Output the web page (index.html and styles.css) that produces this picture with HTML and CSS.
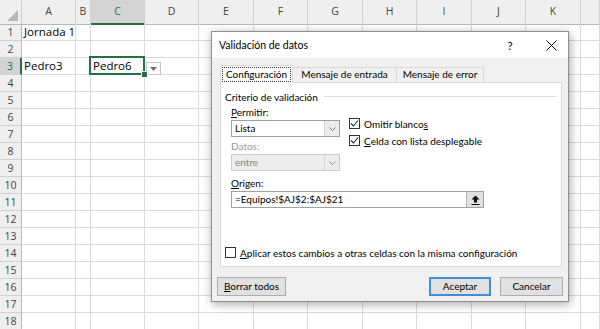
FILE: index.html
```html
<!DOCTYPE html>
<html>
<head>
<meta charset="UTF-8">
<title>Validación de datos</title>
<link rel="stylesheet" href="styles.css">
</head>
<body>
<div class="sheet">
  <div class="row head">
    <div class="corner"></div><div>A</div><div>B</div><div class="on">C</div><div>D</div><div>E</div><div>F</div><div>G</div><div>H</div><div>I</div><div>J</div><div>K</div><div></div>
  </div>
  <div class="row"><div class="num">1</div><div>Jornada 1</div><div></div><div></div><div></div><div></div><div></div><div></div><div></div><div></div><div></div><div></div><div></div></div>
  <div class="row"><div class="num">2</div><div></div><div></div><div></div><div></div><div></div><div></div><div></div><div></div><div></div><div></div><div></div><div></div></div>
  <div class="row"><div class="num on">3</div><div>Pedro3</div><div></div><div class="active">Pedro6<span class="handle"></span><span class="drop"><svg width="7" height="4" viewBox="0 0 7 4"><path d="M0 0h7L3.5 4z" fill="#6d6d6d"/></svg></span></div><div></div><div></div><div></div><div></div><div></div><div></div><div></div><div></div><div></div></div>
  <div class="row"><div class="num">4</div><div></div><div></div><div></div><div></div><div></div><div></div><div></div><div></div><div></div><div></div><div></div><div></div></div>
  <div class="row"><div class="num">5</div><div></div><div></div><div></div><div></div><div></div><div></div><div></div><div></div><div></div><div></div><div></div><div></div></div>
  <div class="row"><div class="num">6</div><div></div><div></div><div></div><div></div><div></div><div></div><div></div><div></div><div></div><div></div><div></div><div></div></div>
  <div class="row"><div class="num">7</div><div></div><div></div><div></div><div></div><div></div><div></div><div></div><div></div><div></div><div></div><div></div><div></div></div>
  <div class="row"><div class="num">8</div><div></div><div></div><div></div><div></div><div></div><div></div><div></div><div></div><div></div><div></div><div></div><div></div></div>
  <div class="row"><div class="num">9</div><div></div><div></div><div></div><div></div><div></div><div></div><div></div><div></div><div></div><div></div><div></div><div></div></div>
  <div class="row"><div class="num">10</div><div></div><div></div><div></div><div></div><div></div><div></div><div></div><div></div><div></div><div></div><div></div><div></div></div>
  <div class="row"><div class="num">11</div><div></div><div></div><div></div><div></div><div></div><div></div><div></div><div></div><div></div><div></div><div></div><div></div></div>
  <div class="row"><div class="num">12</div><div></div><div></div><div></div><div></div><div></div><div></div><div></div><div></div><div></div><div></div><div></div><div></div></div>
  <div class="row"><div class="num">13</div><div></div><div></div><div></div><div></div><div></div><div></div><div></div><div></div><div></div><div></div><div></div><div></div></div>
  <div class="row"><div class="num">14</div><div></div><div></div><div></div><div></div><div></div><div></div><div></div><div></div><div></div><div></div><div></div><div></div></div>
  <div class="row"><div class="num">15</div><div></div><div></div><div></div><div></div><div></div><div></div><div></div><div></div><div></div><div></div><div></div><div></div></div>
  <div class="row"><div class="num">16</div><div></div><div></div><div></div><div></div><div></div><div></div><div></div><div></div><div></div><div></div><div></div><div></div></div>
  <div class="row"><div class="num">17</div><div></div><div></div><div></div><div></div><div></div><div></div><div></div><div></div><div></div><div></div><div></div><div></div></div>
  <div class="row"><div class="num">18</div><div></div><div></div><div></div><div></div><div></div><div></div><div></div><div></div><div></div><div></div><div></div><div></div></div>
</div>

<div class="dialog">
  <div class="titlebar">
    <span class="title">Validación de datos</span>
    <span class="tbtn help">?</span>
    <span class="tbtn close"><svg width="11" height="11" viewBox="0 0 11 11"><path d="M0.5 0.5l10 10M10.5 0.5l-10 10" stroke="#000" stroke-width="1"/></svg></span>
  </div>
  <div class="dlg-body">
    <div class="tabs">
      <div class="tab on"><span class="focus">Configuración</span></div>
      <div class="tab t2">Mensaje de entrada</div>
      <div class="tab t3">Mensaje de error</div>
    </div>
    <div class="panel">
      <div class="legend">Criterio de validación</div>
      <div class="form">
        <div class="fields">
          <div class="col-left">
            <div class="label"><u>P</u>ermitir:</div>
            <div class="select"><span class="val">Lista</span><span class="arrow"><svg width="7" height="4" viewBox="0 0 7 4"><path d="M0.5 0.5l3 3 3-3" fill="none" stroke="#707070"/></svg></span></div>
            <div class="label dim">Datos:</div>
            <div class="select off"><span class="val">entre</span><span class="arrow"><svg width="7" height="4" viewBox="0 0 7 4"><path d="M0.5 0.5l3 3 3-3" fill="none" stroke="#8a8a8a"/></svg></span></div>
          </div>
          <div class="col-right">
            <div class="check"><span class="box"><svg width="9" height="9" viewBox="0 0 9 9"><path d="M1 4.5l2.5 2.5 4.5-5.5" fill="none" stroke="#222" stroke-width="1.1"/></svg></span>Omitir blanco<u>s</u></div>
            <div class="check"><span class="box"><svg width="9" height="9" viewBox="0 0 9 9"><path d="M1 4.5l2.5 2.5 4.5-5.5" fill="none" stroke="#222" stroke-width="1.1"/></svg></span><u>C</u>elda con lista desplegable</div>
          </div>
        </div>
        <div class="label origin"><u>O</u>rigen:</div>
        <div class="input"><span class="val">=Equipos!$AJ$2:$AJ$21</span><span class="pick"><svg width="9" height="10" viewBox="0 0 9 10"><path d="M4.5 0.5L8.5 4.5H6V7.5H3V4.5H0.5Z" fill="#111"/><path d="M0.5 9.5h8" stroke="#111"/></svg></span></div>
      </div>
      <div class="check apply"><span class="box"></span><u>A</u>plicar estos cambios a otras celdas con la misma configuración</div>
    </div>
    <div class="buttons">
      <div class="btn clear"><u>B</u>orrar todos</div>
      <div class="btn ok">Aceptar</div>
      <div class="btn cancel">Cancelar</div>
    </div>
  </div>
</div>
</body>
</html>
```

FILE: styles.css
```css
body {
  margin: 0;
  background: #fff;
  overflow: hidden;
}

/* hoja */
.sheet {
  width: 600px;
  font-family: "Open Sans", sans-serif;
  font-size: 11.5px;
  color: #000;
}
.row {
  display: grid;
  grid-template-columns: 22px 54px 15px 54px 54px 55px 54px 55px 54px 55px 54px 55px 1fr;
  height: 17px;
}
.row > div {
  box-sizing: border-box;
  border-right: 1px solid #dadada;
  border-bottom: 1px solid #dadada;
  padding-left: 2px;
  line-height: 16px;
  white-space: nowrap;
}
.row.head {
  height: 24px;
}
.row.head > div {
  background: #efefef;
  border-right-color: #d0d0d0;
  border-bottom: 1px solid #b8b8b8;
  text-align: center;
  padding: 0;
  line-height: 23px;
  font-size: 10.5px;
  color: #444;
}
.row.head > div.on {
  background: #d4d4d4;
  color: #217346;
  border-bottom: 2px solid #217346;
}
.corner {
  position: relative;
}
.corner::after {
  content: "";
  position: absolute;
  right: 3px;
  bottom: 3px;
  border-left: 11px solid transparent;
  border-bottom: 11px solid #b6b6b6;
}
.row > .num {
  background: #efefef;
  border-right-color: #b8b8b8;
  border-bottom-color: #d0d0d0;
  text-align: center;
  padding: 0;
  font-size: 10.5px;
  color: #444;
}
.row > .num.on {
  background: #d4d4d4;
  color: #217346;
  border-right: 2px solid #217346;
}
.row > .active {
  position: relative;
}
.active::after {
  content: "";
  position: absolute;
  left: -2px;
  top: -2px;
  right: -1px;
  bottom: -1px;
  border: 2px solid #217346;
}
.handle {
  position: absolute;
  right: -4px;
  bottom: -4px;
  width: 5px;
  height: 5px;
  background: #217346;
  border: 1px solid #fff;
  z-index: 1;
}
.drop {
  position: absolute;
  left: 55px;
  top: 4px;
  width: 13px;
  height: 11px;
  border: 1px solid #c6c6c6;
  background: #fff;
  display: flex;
  align-items: center;
  justify-content: center;
}

/* dialogo */
.dialog {
  position: absolute;
  left: 211px;
  top: 31px;
  width: 358px;
  height: 271px;
  box-sizing: border-box;
  border: 1px solid #8e8e8e;
  background: #f0f0f0;
  box-shadow: 1px 2px 9px rgba(0, 0, 0, 0.35);
  font-family: Lato, sans-serif;
  font-size: 10px;
  color: #000;
  display: flex;
  flex-direction: column;
}
.titlebar {
  height: 26px;
  background: #fff;
  display: flex;
  align-items: center;
  padding-left: 7px;
  font-size: 10.5px;
}
.title {
  flex: 1;
}
.tbtn {
  width: 34px;
  height: 26px;
  display: flex;
  align-items: center;
  justify-content: center;
}
.help {
  margin-right: 7px;
  font-size: 11.5px;
}
.dlg-body {
  flex: 1;
  padding: 7px 6px 0 8px;
  display: flex;
  flex-direction: column;
}
.tabs {
  display: flex;
  align-items: flex-end;
  height: 17px;
}
.tab {
  box-sizing: border-box;
  height: 15px;
  border: 1px solid #d9d9d9;
  border-bottom: none;
  background: #f0f0f0;
  text-align: center;
  line-height: 13px;
}
.tab.on {
  width: 73px;
  height: 18px;
  margin-bottom: -1px;
  background: #fff;
  position: relative;
  z-index: 1;
  padding-top: 1px;
  line-height: 13px;
}
.focus {
  display: inline-block;
  padding: 0 3px;
  border: 1px dotted #333;
}
.t2 {
  width: 104px;
  border-left: none;
}
.t3 {
  width: 87px;
  border-left: none;
}
.panel {
  height: 185px;
  box-sizing: border-box;
  background: #fff;
  border: 1px solid #d9d9d9;
  display: flex;
  flex-direction: column;
}
.legend {
  display: flex;
  align-items: center;
  height: 13px;
  margin: 7px 4px 0 4px;
}
.legend::after {
  content: "";
  flex: 1;
  height: 1px;
  background: #dcdcdc;
  margin-left: 6px;
}
.form {
  margin-left: 10px;
}
.fields {
  display: flex;
}
.col-left {
  width: 109px;
}
.col-right {
  margin: 12px 0 0 9px;
}
.label {
  height: 13px;
  line-height: 13px;
  margin-top: 3px;
  margin-bottom: 1px;
}
.label.dim {
  color: #9a9a9a;
  margin-top: 3px;
}
.label.origin {
  margin-top: 6px;
}
.select {
  display: flex;
  height: 17px;
  box-sizing: border-box;
  border: 1px solid #a0a0a0;
  background: #fff;
}
.select .val {
  flex: 1;
  padding-left: 3px;
  line-height: 15px;
}
.select .arrow {
  width: 14px;
  border-left: 1px solid #d4d4d4;
  background: #ececec;
  display: flex;
  align-items: center;
  justify-content: center;
}
.select.off {
  background: #ededed;
  border-color: #cccccc;
  color: #838383;
}
.check {
  display: flex;
  align-items: center;
  height: 17px;
}
.box {
  box-sizing: border-box;
  width: 11px;
  height: 11px;
  border: 1px solid #333;
  background: #fff;
  margin-right: 4px;
  display: flex;
  align-items: center;
  justify-content: center;
}
.input {
  display: flex;
  width: 253px;
  height: 17px;
  box-sizing: border-box;
  border: 1px solid #a0a0a0;
  background: #fff;
}
.input .val {
  flex: 1;
  padding-left: 3px;
  line-height: 15px;
}
.pick {
  width: 16px;
  background: #e1e1e1;
  border-left: 1px solid #b4b4b4;
  display: flex;
  align-items: center;
  justify-content: center;
}
.apply {
  margin: auto 0 5px 4px;
}
.buttons {
  display: flex;
  margin: 10px -1px 0 -3px;
}
.btn {
  box-sizing: border-box;
  height: 19px;
  line-height: 17px;
  text-align: center;
  background: #e1e1e1;
  border: 1px solid #adadad;
}
.clear {
  width: 69px;
  margin-right: auto;
}
.ok {
  width: 62px;
  border: 2px solid #3d8ee0;
  line-height: 15px;
}
.cancel {
  width: 63px;
  margin-left: 9px;
}
```
